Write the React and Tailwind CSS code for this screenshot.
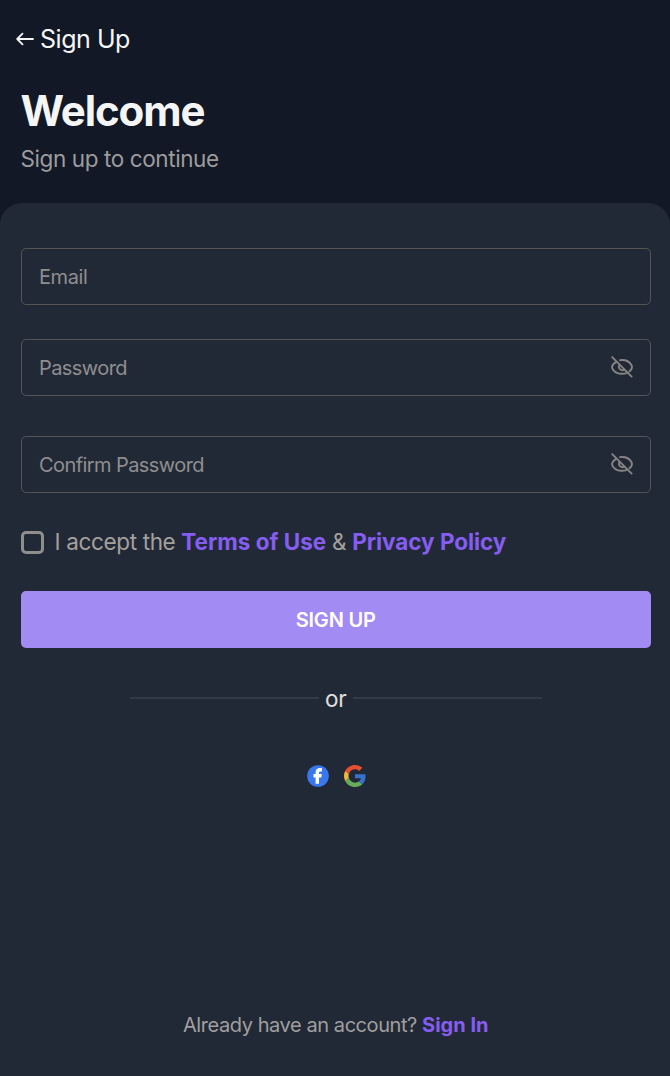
import React from "react";

function EyeOffIcon() {
  return (
    <svg className="mb-[2px] size-[22px]" viewBox="0 0 22 22" fill="none" stroke="#858483" strokeWidth="1.9" strokeLinecap="round" aria-hidden="true">
      <path d="M1.2 1.2 20.6 20.6" />
      <path d="M9 4.2c.7-.1 1.3-.2 2-.2 4.2 0 7.6 1.8 9.4 5 .7 1.3.7 2.7 0 4-.5.9-1.2 1.7-2 2.4" />
      <path d="M4.800 6.1C3.5 6.9 2.400 7.9 1.600 9.2c-.7 1.2-.7 2.5 0 3.7C3.400 16 6.800 17.800 11 17.800c1.500 0 2.900-.2 4.200-.7" />
      <path d="M8.300 8.800c-1.300 2.700.6 5.400 3.200 5.400.7 0 1.200-.2 1.700-.5" />
    </svg>
  );
}

function Field({ label, secret = false, className = "" }) {
  return (
    <div
      className={`flex h-[57px] w-full items-center justify-between rounded-[5px] border border-[#545455] pr-[17px] pl-[17.5px] text-[20px] text-[#8f8e8f] ${className}`}
    >
      <span className={secret ? "tracking-[-0.58px]" : "tracking-[-0.4px]"}>{label}</span>
      {secret && <EyeOffIcon />}
    </div>
  );
}

function FacebookLogo() {
  return (
    <svg className="size-[22px]" viewBox="0 0 22 22" aria-hidden="true">
      <circle cx="11" cy="11" r="10.8" fill="#3b77ec" />
      <path
        d="M8.600 18.700v-6.200H6.500V9.100h2.100V7.600c0-3.100 1.700-4.600 4.300-4.600.8 0 1.500.1 2 .2v3.200h-1.400c-1.100 0-1.500.5-1.500 1.300v1.400h2.800l-.5 3.400H12v6.200z"
        fill="#fff"
      />
    </svg>
  );
}

function GoogleLogo() {
  return (
    <svg className="size-[22px]" viewBox="0 0 48 48" aria-hidden="true">
      <path fill="#e4502f" d="M24 9.5c3.54 0 6.71 1.22 9.21 3.6l6.85-6.85C35.9 2.38 30.47 0 24 0 14.62 0 6.51 5.38 2.56 13.22l7.98 6.19C12.43 13.72 17.74 9.5 24 9.5z" />
      <path fill="#3871cb" d="M46.98 24.55c0-1.57-.15-3.09-.38-4.55H24v9.02h12.94c-.58 2.96-2.26 5.48-4.78 7.18l7.73 6c4.51-4.18 7.09-10.36 7.09-17.65z" />
      <path fill="#f1b840" d="M10.53 28.59c-.48-1.45-.76-2.99-.76-4.59s.27-3.14.76-4.59l-7.98-6.19C.92 16.46 0 20.12 0 24c0 3.88.92 7.54 2.56 10.78l7.97-6.19z" />
      <path fill="#67ac5b" d="M24 48c6.48 0 11.93-2.13 15.89-5.81l-7.73-6c-2.15 1.45-4.92 2.3-8.16 2.3-6.26 0-11.57-4.22-13.47-9.91l-7.98 6.19C6.51 42.62 14.62 48 24 48z" />
    </svg>
  );
}

export default function App() {
  return (
    <div className="flex h-[1076px] w-full flex-col overflow-hidden bg-[#121826] font-['Inter',sans-serif] font-[440]">
      <header className="h-[203px] shrink-0 pl-[21px]">
        <div className="-ml-[5px] flex h-[78px] items-center gap-[6px] text-[25px] tracking-[-0.47px] text-[#f5f5f5]">
          <svg className="h-[14px] w-[18px]" viewBox="0 0 18 14" fill="none" stroke="currentColor" strokeWidth="1.8" strokeLinecap="round" strokeLinejoin="round" aria-hidden="true">
            <path d="M17 7H1.2M6.5 1.6 1.2 7l5.3 5.4" />
          </svg>
          <span className="pt-[2px]">Sign Up</span>
        </div>
        <h1 className="-ml-[0.5px] mt-[8px] text-[42px] leading-[50px] font-bold tracking-[-1.12px] text-[#f5f5f5]">Welcome</h1>
        <p className="-ml-[0.5px] mt-[8px] text-[22.5px] leading-[30px] tracking-[-0.4px] text-[#9d9c9c]">Sign up to continue</p>
      </header>

      <main className="flex flex-1 flex-col rounded-t-[22px] bg-[#222936] pt-[45px] pr-[19px] pl-[20.5px]">
        <Field label="Email" />
        <Field label="Password" secret className="mt-[34px]" />
        <Field label="Confirm Password" secret className="mt-[40px]" />

        <div className="mt-[33px] flex h-[32px] items-center text-[22.5px] tracking-[-0.35px] text-[#a4a09c]">
          <span className="mr-[11px] size-[23px] rounded-[5px] border-3 border-[#8f8e8e]" />
          <p>
            I accept the <a className="font-bold tracking-[-0.02px] text-[#855df0]">Terms of Use</a> &amp;{" "}
            <a className="font-bold tracking-[-0.05px] text-[#855df0]">Privacy Policy</a>
          </p>
        </div>

        <button className="mt-[33px] h-[57px] w-full rounded-[5px] bg-[#a28bf3] text-[20px] font-semibold tracking-[-0.18px] text-white">
          SIGN UP
        </button>

        <div className="mt-[34px] flex h-[32px] items-center justify-center gap-[6px] text-[22.5px] tracking-[-0.2px] text-[#e0dfdd]">
          <span className="h-[2px] w-[189px] bg-[#333a47]" />
          <span className="pt-[2px]">or</span>
          <span className="h-[2px] w-[189px] bg-[#333a47]" />
        </div>

        <div className="mt-[51px] flex justify-center gap-[15px] pl-[1px]">
          <FacebookLogo />
          <GoogleLogo />
        </div>

        <p className="mt-auto mb-[36px] text-center text-[20px] leading-[30px] tracking-[-0.43px] text-[#a09f9f]">
          Already have an account? <a className="font-bold tracking-[0px] text-[#855df0]">Sign In</a>
        </p>
      </main>
    </div>
  );
}
